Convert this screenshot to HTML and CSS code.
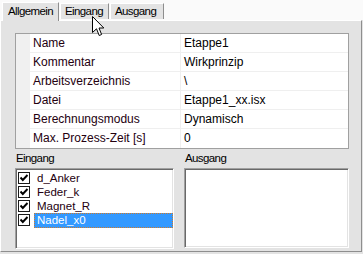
FILE: index.html
```html
<!DOCTYPE html>
<html lang="de">
<head>
  <meta charset="UTF-8">
  <title>Etappe1</title>
  <link rel="stylesheet" href="styles.css">
</head>
<body>

  <div class="tabs">
    <div class="tab active">Allgemein</div>
    <div class="tab tab-in">Eingang</div>
    <div class="tab tab-out">Ausgang</div>
  </div>

  <div class="panel">

    <div class="grid">
      <div class="row"><span class="gut"></span><span class="key">Name</span><span class="val">Etappe1</span></div>
      <div class="row"><span class="gut"></span><span class="key">Kommentar</span><span class="val">Wirkprinzip</span></div>
      <div class="row"><span class="gut"></span><span class="key">Arbeitsverzeichnis</span><span class="val">\</span></div>
      <div class="row"><span class="gut"></span><span class="key">Datei</span><span class="val">Etappe1_xx.isx</span></div>
      <div class="row"><span class="gut"></span><span class="key">Berechnungsmodus</span><span class="val">Dynamisch</span></div>
      <div class="row"><span class="gut"></span><span class="key">Max. Prozess-Zeit [s]</span><span class="val">0</span></div>
    </div>

    <div class="lists">
      <div class="col col-in">
        <div class="label">Eingang</div>
        <div class="listbox">
          <div class="item"><span class="check"><svg width="10" height="10" viewBox="0 0 10 10"><polyline points="1.5,4.5 3.8,7 8.5,2" fill="none" stroke="#000" stroke-width="1.9"/></svg></span><span class="text">d_Anker</span></div>
          <div class="item"><span class="check"><svg width="10" height="10" viewBox="0 0 10 10"><polyline points="1.5,4.5 3.8,7 8.5,2" fill="none" stroke="#000" stroke-width="1.9"/></svg></span><span class="text">Feder_k</span></div>
          <div class="item"><span class="check"><svg width="10" height="10" viewBox="0 0 10 10"><polyline points="1.5,4.5 3.8,7 8.5,2" fill="none" stroke="#000" stroke-width="1.9"/></svg></span><span class="text">Magnet_R</span></div>
          <div class="item"><span class="check"><svg width="10" height="10" viewBox="0 0 10 10"><polyline points="1.5,4.5 3.8,7 8.5,2" fill="none" stroke="#000" stroke-width="1.9"/></svg></span><span class="text selected">Nadel_x0</span></div>
        </div>
      </div>
      <div class="col col-out">
        <div class="label">Ausgang</div>
        <div class="listbox"></div>
      </div>
    </div>

  </div>

  <!-- mouse pointer over the Eingang tab -->
  <svg class="pointer" width="13" height="21" viewBox="0 0 13 21">
    <path d="M0.5 0.5 L0.5 16.5 L4.5 12.8 L7.2 19.5 L9.6 18.5 L7 12 L11.8 12 Z" fill="#fff" stroke="#000" stroke-width="1"/>
  </svg>

</body>
</html>
```

FILE: styles.css
```css
body {
  margin: 0;
  width: 363px;
  height: 254px;
  background: #e3e3e3;
  font-family: "Liberation Sans", Arial, sans-serif;
  font-size: 11.5px;
  color: #000;
  position: relative;
  overflow: hidden;
}

.tabs {
  height: 20px;
  background: #fafafa;
  display: flex;
  align-items: flex-end;
  padding-left: 2px;
  gap: 1px;
}

.tab {
  box-sizing: border-box;
  height: 16px;
  background: #e3e3e3;
  border-left: 1px solid #fff;
  border-top: 1px solid #fff;
  border-right: 1px solid #8e8e8e;
  letter-spacing: -0.6px;
  line-height: 14px;
  padding-left: 4px;
  margin-bottom: 1px;
}

.tab.active {
  width: 57px;
  height: 19px;
  margin-bottom: -1px;
  padding-left: 5px;
  line-height: 17px;
  position: relative;
  z-index: 1;
}

.tab-in {
  width: 49px;
}

.tab-out {
  width: 54px;
}

.panel {
  box-sizing: border-box;
  width: 362px;
  height: 232px;
  border-top: 1px solid #fff;
  border-left: 1px solid #fff;
  border-right: 1px solid #8e8e8e;
  border-bottom: 1px solid #8e8e8e;
  padding: 12px 0 0 14px;
}

.grid {
  box-sizing: border-box;
  width: 334px;
  border: 1px solid #a0a0a0;
  background: #fff;
  font-size: 12px;
}

.row {
  display: flex;
  height: 19px;
}

.gut {
  width: 14px;
  background: #f0f0f0;
}

.key,
.val {
  box-sizing: border-box;
  height: 19px;
  line-height: 18px;
  border-bottom: 1px solid #efefef;
  padding-left: 3px;
  white-space: nowrap;
}

.key {
  width: 151px;
  border-right: 1px solid #efefef;
  color: #24000f;
}

.val {
  flex: 1;
}

.row:last-child .key,
.row:last-child .val {
  border-bottom: none;
}

.lists {
  display: flex;
  gap: 10px;
}

.col-in {
  width: 159px;
}

.col-out {
  width: 165px;
}

.label {
  padding-top: 3px;
  line-height: 13px;
  margin-bottom: 3px;
  padding-left: 1px;
  letter-spacing: -0.6px;
}

.listbox {
  box-sizing: border-box;
  height: 80px;
  background: #fff;
  border-top: 1px solid #a0a0a0;
  border-left: 1px solid #a0a0a0;
  border-right: 1px solid #fff;
  border-bottom: 1px solid #fff;
  box-shadow: inset 1px 1px 0 #696969, inset -1px -1px 0 #e3e3e3;
  padding-top: 2px;
  padding-left: 1px;
}

.col-in .listbox {
  height: 81px;
}

.item {
  display: flex;
  align-items: center;
  height: 14px;
  margin-left: 1px;
}

.check {
  box-sizing: border-box;
  width: 12px;
  height: 12px;
  border: 1px solid #1a1a1a;
  background: #fff;
  display: flex;
  align-items: center;
  justify-content: center;
}

.text {
  flex: 1;
  margin-left: 4px;
  padding-left: 3px;
  height: 14px;
  line-height: 14px;
  color: #24000f;
  box-sizing: border-box;
}

.text.selected {
  background: #3399ff;
  color: #fff;
  outline: 1px dotted #d07a2a;
  outline-offset: -1px;
  height: 15px;
}

.pointer {
  position: absolute;
  left: 92px;
  top: 16px;
}
```
